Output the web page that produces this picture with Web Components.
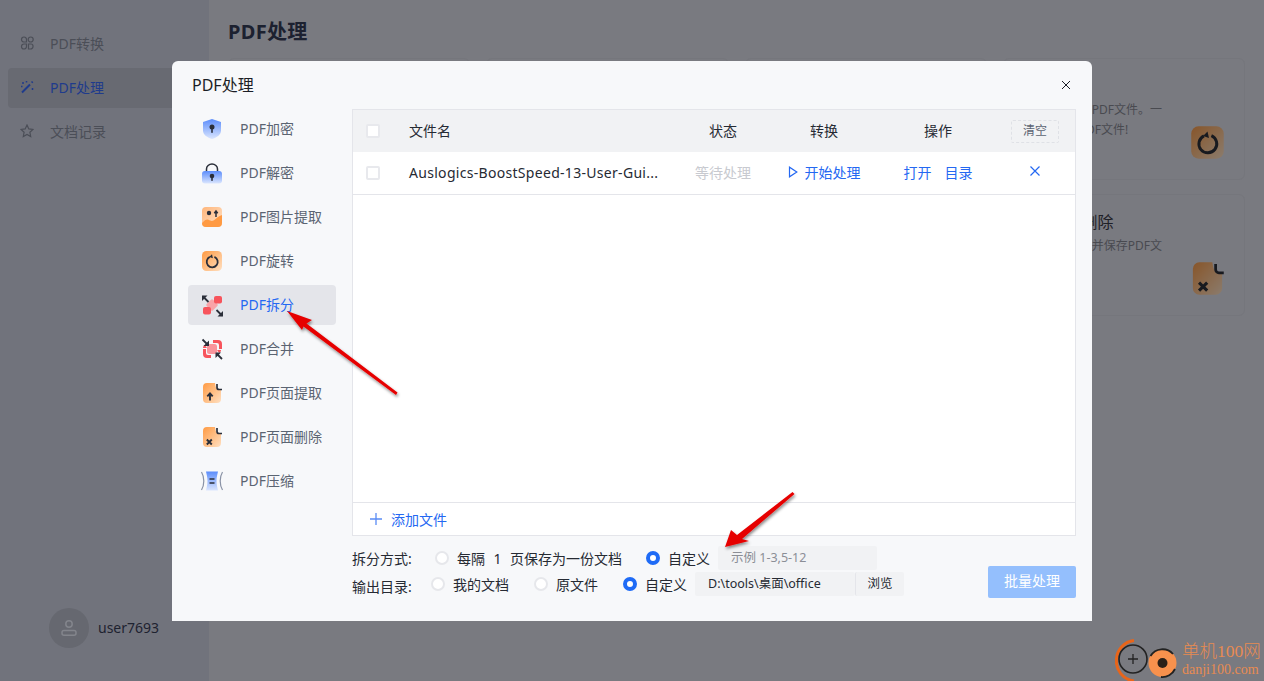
<!DOCTYPE html>
<html lang="zh">
<head>
<meta charset="utf-8">
<title>PDF处理</title>
<style>
  html, body { margin: 0; height: 100%; }
  body { font-family: "Noto Sans", "Noto Sans CJK SC", sans-serif; overflow: hidden; }
</style>
</head>
<body>
<app-shell></app-shell>

<script>
const PAGE = `<path d="M3 6a4 4 0 0 1 4-4h8c.5 3 .5 7 6 7v9a4 4 0 0 1-4 4H7a4 4 0 0 1-4-4Z" fill="url(#orange)"/><path d="M17 3v3.500a2 2 0 0 0 2 2h3" fill="none" stroke="#2b2f3a" stroke-width="1.700"/>`;

const ICONS = {
    encrypt: `<path d="M12 2 21 5v8.500c0 4.500-4.500 7-9 8.500-4.500-1.500-9-4-9-8.500V5Z" fill="url(#blue)"/><circle cx="12" cy="10" r="2.500" fill="#2b2f3a"/><rect x="11.200" y="11" width="1.600" height="5" rx=".8" fill="#2b2f3a"/>`,
    decrypt: `<path d="M6.500 11V8a5.500 5 0 0 1 11 0v2" fill="none" stroke="#2b2f3a" stroke-width="1.500"/><rect x="2" y="10" width="20" height="12.500" rx="3" fill="url(#blue)"/><circle cx="12" cy="15" r="2.300" fill="#2b2f3a"/><rect x="11.200" y="15.500" width="1.600" height="4.500" rx=".8" fill="#2b2f3a"/>`,
    image: `<rect x="2" y="2" width="20" height="20" rx="4" fill="url(#peach)"/><path d="M2 18c3-3 4.500-4 6.500-3.200s3 2 5.500.4 4.500-4.200 8-5.200V18a4 4 0 0 1-4 4H6a4 4 0 0 1-4-4Z" fill="#ff9a42"/><circle cx="9" cy="8" r="2.200" fill="#2b2f3a"/><path d="M16 12V6.500M14.300 8.300 16 6l1.700 2.300" fill="none" stroke="#2b2f3a" stroke-width="1.500"/>`,
    rotate: `<rect x="2" y="2" width="20" height="20" rx="4.500" fill="url(#orange)"/><path d="M9.800 7.900a5.500 5.500 0 1 0 4.600-.1" fill="none" stroke="#2b2f3a" stroke-width="1.800"/><path d="M12 5.200 9.300 8l3.600 1.200Z" fill="#2b2f3a"/>`,
    split: `<rect x="7.500" y="7.500" width="9" height="9" rx="1.500" fill="#f9a3a8" transform="rotate(45 12 12)"/><rect x="14" y="3" width="8" height="7.500" rx="2" fill="#f7545c"/><rect x="3" y="14" width="8" height="7.500" rx="2" fill="#f7545c"/><path d="M2 2.500h5.500L2 8Z" fill="#2b2f3a"/><path d="M3 3.500l5.500 5.500" stroke="#2b2f3a" stroke-width="1.800"/><path d="M23 23.500h-5.500L23 18Z" fill="#2b2f3a"/><path d="M22 22.500 16.500 17" stroke="#2b2f3a" stroke-width="1.800"/>`,
    merge: `<path d="M13 3h5a4 4 0 0 1 4 4v5h-3V8a2 2 0 0 0-2-2h-4ZM11 21H7a4 4 0 0 1-4-4v-5h3v4a2 2 0 0 0 2 2h3Z" fill="#f7545c"/><path d="M3 11c0-1 .4-2 1.500-3L7 10.500 6 11ZM21 13c0 1-.4 2-1.500 3L17 13.500 18 13Z" fill="#f7545c"/><rect x="7" y="7" width="10" height="10" rx="2.500" fill="#f9959c"/><path d="M9 9H3.500L9 3.500Z" fill="#2b2f3a"/><path d="M2.500 2.500l5.500 5.500" stroke="#2b2f3a" stroke-width="1.800"/><path d="M15.500 15.500H21L15.500 21Z" fill="#2b2f3a"/><path d="M22 22l-5.500-5.500" stroke="#2b2f3a" stroke-width="1.800"/>`,
    pageout: `${PAGE}<path d="M10 19.500v-6.500M7.300 15.300 10 12.300l2.700 3" fill="none" stroke="#2b2f3a" stroke-width="1.900"/>`,
    pagedel: `${PAGE}<path d="M6.800 14.500l5 5M11.800 14.500l-5 5" fill="none" stroke="#2b2f3a" stroke-width="1.900"/>`,
    compress: `<path d="M6 2.500h12c-.5 3-1.500 5-1.500 9.500s1 6.500 1.500 9.500H6c.5-3 1.500-5 1.500-9.500S6.500 5.500 6 2.500Z" fill="url(#blue)"/><path d="M9.500 10h5M9.500 14h5" stroke="#2b2f3a" stroke-width="1.700"/><path d="M1.500 3c1.800 3 2.300 5.500 2.300 9s-.5 6-2.300 9M22.500 3c-1.800 3-2.300 5.500-2.300 9s.5 6 2.300 9" fill="none" stroke="#8a93a6" stroke-width="1.200"/>`
};

const GRADIENTS = `<defs>
    <linearGradient id="blue" x1="0" y1="0" x2="0" y2="1"><stop offset="0" stop-color="#5c8dfb"/><stop offset="1" stop-color="#dbe6fe"/></linearGradient>
    <linearGradient id="peach" x1="0" y1="0" x2="1" y2="1"><stop offset="0" stop-color="#ffb57a"/><stop offset="1" stop-color="#ffe3c8"/></linearGradient>
    <linearGradient id="orange" x1="0" y1="0" x2="1" y2="1"><stop offset="0" stop-color="#ff9a42"/><stop offset="1" stop-color="#ffe0c2"/></linearGradient>
</defs>`;

function iconSvg(name, size) {
    return `<svg viewBox="0 0 24 24" width="${size}" height="${size}">${GRADIENTS}${ICONS[name]}</svg>`;
}

class NavItem extends HTMLElement {
    constructor() {
        super();
        this.attachShadow({ mode: "open" });
        this.shadowRoot.innerHTML = `
        <style>
            :host { display: flex; align-items: center; height: 40px; padding: 0 0 2px 12px; box-sizing: border-box; gap: 16px; border-radius: 4px; font-size: 14px; color: #4b4e57; }
            :host([active]) { background: #686a72; color: #1f3b8c; }
        </style>
        <slot name="icon"></slot>
        <slot></slot>`;
    }
}
customElements.define("nav-item", NavItem);

class SideBar extends HTMLElement {
    constructor() {
        super();
        this.attachShadow({ mode: "open" });
        this.shadowRoot.innerHTML = `
        <style>
            :host { display: flex; flex-direction: column; width: 209px; box-sizing: border-box; padding: 24px 0 0 8px; background: #71737c; }
            nav { display: flex; flex-direction: column; gap: 4px; }
            .user { margin-top: auto; margin-bottom: 33px; margin-left: 41px; display: flex; align-items: center; gap: 9px; font-size: 14px; color: #1e2230; }
            .user span { position: relative; top: -1px; }
            .avatar { width: 40px; height: 40px; border-radius: 50%; background: #666870; display: flex; align-items: center; justify-content: center; }
        </style>
        <nav>
            <nav-item>
                <svg slot="icon" width="14" height="14" viewBox="0 0 14 14" fill="none" stroke="#4b4e57" stroke-width="1.200"><path d="M1.500 3.500a2.500 2.500 0 0 1 5 0V6h-2.500a2.500 2.500 0 0 1-2.500-2.500ZM1.500 10.500A2.500 2.500 0 0 1 4 8h2.500v2.500a2.500 2.500 0 0 1-5 0ZM8.500 8H11a2 2 0 0 1 2 2v.5a2.500 2.500 0 0 1-2.500 2.500h-2Z"/><circle cx="10.700" cy="3.500" r="2.500"/></svg>
                PDF转换
            </nav-item>
            <nav-item active>
                <svg slot="icon" width="14" height="14" viewBox="0 0 14 14" fill="none" stroke="#1f3b8c" stroke-width="1.900"><path d="M2 12.500 10 4.500"/><path d="M11.500 1.500l1.300 1.300M3 2v2M12.500 8v2M6.500 1v1.500M1 6.500h1.500" stroke-width="1.500"/></svg>
                PDF处理
            </nav-item>
            <nav-item>
                <svg slot="icon" width="14" height="14" viewBox="0 0 14 14" fill="none" stroke="#4b4e57" stroke-width="1.200"><path d="M7 1 8.800 4.900l4.200.5-3.100 2.900.8 4.200L7 10.500l-3.700 2 .8-4.200L1 5.400l4.200-.5Z"/></svg>
                文档记录
            </nav-item>
        </nav>
        <div class="user">
            <div class="avatar"><svg width="18" height="18" viewBox="0 0 18 18" fill="none" stroke="#83858c" stroke-width="1.500"><circle cx="9" cy="5" r="3.200"/><rect x="2" y="11.500" width="14" height="4.800" rx="2"/></svg></div>
            <span>user7693</span>
        </div>`;
    }
}
customElements.define("side-bar", SideBar);

class FeatureCard extends HTMLElement {
    constructor() {
        super();
        const icon = this.getAttribute("icon");
        this.attachShadow({ mode: "open" });
        this.shadowRoot.innerHTML = `
        <style>
            :host { display: block; position: relative; box-sizing: border-box; height: 122px; padding: 17px 16px 0 16px; border: 1px solid #75767c; border-radius: 6px; }
            h3 { margin: 0 0 2px; height: 22px; font-size: 16px; font-weight: 400; line-height: 20px; color: #1e2027; }
            p { margin: 0; font-size: 12px; line-height: 20px; color: #494a50; }
            .pic { position: absolute; right: 17px; bottom: 17px; filter: brightness(.55) saturate(.9); }
            .pic svg { display: block; }
        </style>
        <h3><slot name="title"></slot></h3>
        <p><slot></slot></p>
        ${icon ? `<div class="pic">${iconSvg(icon, 39)}</div>` : ""}`;
    }
}
customElements.define("feature-card", FeatureCard);

class ToolItem extends HTMLElement {
    constructor() {
        super();
        this.attachShadow({ mode: "open" });
        this.shadowRoot.innerHTML = `
        <style>
            :host { display: flex; align-items: center; height: 40px; padding-left: 12px; gap: 16px; border-radius: 4px; font-size: 14px; color: #5b6472; }
            :host([active]) { background: #e4e5ea; color: #2468f2; }
            svg { display: block; }
            span { position: relative; top: -1px; }
        </style>
        ${iconSvg(this.getAttribute("icon"), 24)}
        <span><slot></slot></span>`;
    }
}
customElements.define("tool-item", ToolItem);

class FileTable extends HTMLElement {
    constructor() {
        super();
        this.attachShadow({ mode: "open" });
        this.shadowRoot.innerHTML = `
        <style>
            :host { display: flex; flex-direction: column; height: 427px; box-sizing: border-box; border: 1px solid #e4e5ea; background: #fff; font-size: 14px; color: #262a33; }
            .row { display: grid; grid-template-columns: 56px 281px 66px 136px 92px 1fr; align-items: center; height: 42px; flex: none; }
            .head { background: #f1f2f4; }
            .body { border-bottom: 1px solid #e4e5ea; height: 43px; box-sizing: border-box; }
            .t { position: relative; top: -1px; }
            .name { letter-spacing: .3px; white-space: nowrap; }
            .c { text-align: center; }
            .box { width: 14px; height: 14px; margin-left: 13px; box-sizing: border-box; background: #fff; border: 2px solid #e8e9ed; border-radius: 2px; }
            .wait { color: #c8cad0; }
            .blue { color: #2468f2; }
            .start { display: flex; align-items: center; justify-content: center; gap: 7px; }
            .ops { display: flex; justify-content: center; gap: 13px; }
            .clear { justify-self: end; margin-right: 16px; width: 48px; height: 23px; line-height: 20px; box-sizing: border-box; border: 1px dashed #dfe1e6; border-radius: 2px; text-align: center; font-size: 12px; color: #5b6472; }
            .x { justify-self: end; margin-right: 35px; position: relative; top: -2px; }
            .spacer { flex: 1; }
            .add { height: 32px; border-top: 1px solid #e4e5ea; display: flex; align-items: center; gap: 9px; padding-left: 17px; color: #2468f2; font-size: 14px; }
        </style>
        <div class="row head">
            <span class="box"></span><span class="t">文件名</span><span class="c t">状态</span><span class="c t">转换</span><span class="c t">操作</span><span class="clear">清空</span>
        </div>
        <div class="row body">
            <span class="box"></span>
            <span class="t name">Auslogics-BoostSpeed-13-User-Gui...</span>
            <span class="c wait t">等待处理</span>
            <span class="start blue t"><svg width="10" height="12" viewBox="0 0 10 12" fill="none" stroke="#2468f2" stroke-width="1.200"><path d="M1.500 1.200v9.600L8.800 6Z"/></svg>开始处理</span>
            <span class="ops blue t"><span>打开</span><span>目录</span></span>
            <svg class="x" width="10" height="10" viewBox="0 0 10 10" stroke="#2468f2" stroke-width="1.200"><path d="M.5.5l9 9M9.500.5l-9 9"/></svg>
        </div>
        <div class="spacer"></div>
        <div class="add">
            <svg width="12" height="12" viewBox="0 0 12 12" stroke="#5a8cf5" stroke-width="1.300"><path d="M6 0v12M0 6h12"/></svg>
            添加文件
        </div>`;
    }
}
customElements.define("file-table", FileTable);

class RadioOption extends HTMLElement {
    constructor() {
        super();
        this.attachShadow({ mode: "open" });
        this.shadowRoot.innerHTML = `
        <style>
            :host { display: inline-flex; align-items: center; gap: 8px; font-size: 14px; color: #262a33; }
            i { width: 14px; height: 14px; box-sizing: border-box; border-radius: 50%; background: #fff; border: 2px solid #e6e7eb; }
            :host([checked]) i { background: #fff; border: 4px solid #1f6bf6; }
        </style>
        <i></i><slot></slot>`;
    }
}
customElements.define("radio-option", RadioOption);

class PdfDialog extends HTMLElement {
    constructor() {
        super();
        this.attachShadow({ mode: "open" });
        this.shadowRoot.innerHTML = `
        <style>
            :host { display: flex; flex-direction: column; width: 920px; height: 560px; box-sizing: border-box; background: #f7f8fa; border-radius: 6px 6px 0 0; padding: 0 16px; }
            header { display: flex; align-items: center; justify-content: space-between; height: 48px; padding-left: 4px; font-size: 16px; color: #1b1e26; }
            header span { position: relative; top: -1px; }
            .close { margin-right: 5px; }
            .main { display: flex; gap: 16px; }
            .tools { width: 148px; display: flex; flex-direction: column; gap: 4px; }
            .right { width: 724px; display: flex; flex-direction: column; }
            .foot { display: flex; justify-content: space-between; font-size: 14px; color: #262a33; }
            .opts { display: flex; flex-direction: column; margin-top: 9px; }
            .opt { display: flex; align-items: center; height: 26px; }
            .lbl { width: 79px; flex: none; }
            .low { padding-top: 3px; }
            .num { margin: 0 8.500px; }
            .field { height: 24px; line-height: 23px; background: #f1f2f4; font-size: 12.500px; border-radius: 2px; box-sizing: border-box; padding: 0 12px; }
            .go { align-self: flex-end; width: 88px; height: 32px; line-height: 30px; margin-bottom: -1px; text-align: center; background: #94bffd; color: #fff; border-radius: 2px; font-size: 14px; }
        </style>
        <header>
            <span>PDF处理</span>
            <svg class="close" width="10" height="10" viewBox="0 0 10 10" stroke="#1b1e26" stroke-width="1"><path d="M1 1l8 8M9 1 1 9"/></svg>
        </header>
        <div class="main">
            <div class="tools"><slot name="tools"></slot></div>
            <div class="right">
                <file-table></file-table>
                <div class="foot">
                    <div class="opts">
                        <div class="opt">
                            <span class="lbl">拆分方式:</span>
                            <radio-option style="margin-left:4px"><span>每隔<span class="num">1</span>页保存为一份文档</span></radio-option>
                            <radio-option checked style="margin-left:24px">自定义</radio-option>
                            <span class="field" style="width:159px;margin-left:8px;padding-left:13px;color:#8b8e96">示例 1-3,5-12</span>
                        </div>
                        <div class="opt">
                            <span class="lbl low">输出目录:</span>
                            <radio-option>我的文档</radio-option>
                            <radio-option style="margin-left:25px">原文件</radio-option>
                            <radio-option checked style="margin-left:25px">自定义</radio-option>
                            <span class="field" style="width:160px;margin-left:8px;padding-left:13px">D:\\tools\\桌面\\office</span>
                            <span class="field" style="width:49px;border-left:1px solid #e4e5ea;text-align:center;padding:0">浏览</span>
                        </div>
                    </div>
                    <div class="go">批量处理</div>
                </div>
            </div>
        </div>`;
    }
}
customElements.define("pdf-dialog", PdfDialog);

class AppShell extends HTMLElement {
    constructor() {
        super();
        this.attachShadow({ mode: "open" });
        this.shadowRoot.innerHTML = `
        <style>
            :host { display: flex; position: relative; width: 1264px; height: 681px; overflow: hidden; background: #797a80; }
            main { flex: 1; padding: 0 19px; box-sizing: border-box; }
            h1 { margin: 0; height: 58px; line-height: 64px; font-size: 20px; font-weight: 700; letter-spacing: .3px; color: #1c2130; }
            .grid { display: grid; grid-template-columns: repeat(4, 1fr); gap: 14px 16px; }
            .l1, .l2 { display: block; }
            .l1 { padding-left: 72px; }
            .l2 { padding-left: 59px; }
            .overlay { position: absolute; left: 172px; top: 61px; }
            .arrows { position: absolute; left: 0; top: 0; pointer-events: none; }
            .mark { position: absolute; left: 1115px; top: 638px; display: flex; gap: 4px; }
            .mark div { display: flex; flex-direction: column; color: #e88b52; font-family: "Liberation Serif", "Noto Sans CJK SC", serif; }
            .mark .cn { font-size: 17.500px; line-height: 22px; margin-top: 2px; font-weight: 300; }
            .mark .en { font-size: 14px; line-height: 16px; }
        </style>
        <side-bar></side-bar>
        <main>
            <h1>PDF处理</h1>
            <div class="grid">
                <feature-card></feature-card><feature-card></feature-card><feature-card></feature-card>
                <feature-card icon="rotate"><span slot="title">PDF旋转</span><span class="l1">PDF文件。一</span><span class="l2">PDF文件!</span></feature-card>
                <feature-card></feature-card><feature-card></feature-card><feature-card></feature-card>
                <feature-card icon="pagedel"><span slot="title">PDF页面删除</span><span>删除指定页面并保存PDF文</span></feature-card>
            </div>
        </main>
        <div class="overlay">
            <pdf-dialog>
                <tool-item slot="tools" icon="encrypt">PDF加密</tool-item>
                <tool-item slot="tools" icon="decrypt">PDF解密</tool-item>
                <tool-item slot="tools" icon="image">PDF图片提取</tool-item>
                <tool-item slot="tools" icon="rotate">PDF旋转</tool-item>
                <tool-item slot="tools" icon="split" active>PDF拆分</tool-item>
                <tool-item slot="tools" icon="merge">PDF合并</tool-item>
                <tool-item slot="tools" icon="pageout">PDF页面提取</tool-item>
                <tool-item slot="tools" icon="pagedel">PDF页面删除</tool-item>
                <tool-item slot="tools" icon="compress">PDF压缩</tool-item>
            </pdf-dialog>
        </div>
        <svg class="arrows" width="1264" height="681" viewBox="0 0 1264 681">
            <defs><filter id="sh" x="-20%" y="-20%" width="140%" height="140%"><feDropShadow dx="1" dy="2" stdDeviation="1.500" flood-color="#000" flood-opacity=".45"/></filter></defs>
            <g fill="#e60000" filter="url(#sh)">
                <path d="M287 311 312 320 306.500 323.500 397.500 392.500 396 395 303.500 326.500 302 330Z"/>
                <path d="M725 547 731 530 737 535 792.500 492 794.500 494 742 539 749 541Z"/>
            </g>
        </svg>
        <div class="mark">
            <svg width="63" height="43" viewBox="0 0 63 43">
                <path d="M19 2.500A20 20 0 0 0 1.500 21 20 20 0 0 0 19 43" fill="none" stroke="#e8651a" stroke-width="3"/>
                <circle cx="18" cy="21" r="14" fill="none" stroke="#222" stroke-width="1.600"/>
                <path d="M18 16v10M13 21h10" stroke="#222" stroke-width="1.300"/>
                <circle cx="47.500" cy="25" r="14" fill="#f7914d"/>
                <path d="M35.500 18A14 14 0 0 1 58 16M60 31A14 14 0 0 1 46 39" fill="none" stroke="#222" stroke-width="1.800"/>
                <circle cx="47.500" cy="25" r="5" fill="#2a2018"/>
            </svg>
            <div><span class="cn">单机100网</span><span class="en">danji100.com</span></div>
        </div>`;
    }
}
customElements.define("app-shell", AppShell);
</script>
</body>
</html>
